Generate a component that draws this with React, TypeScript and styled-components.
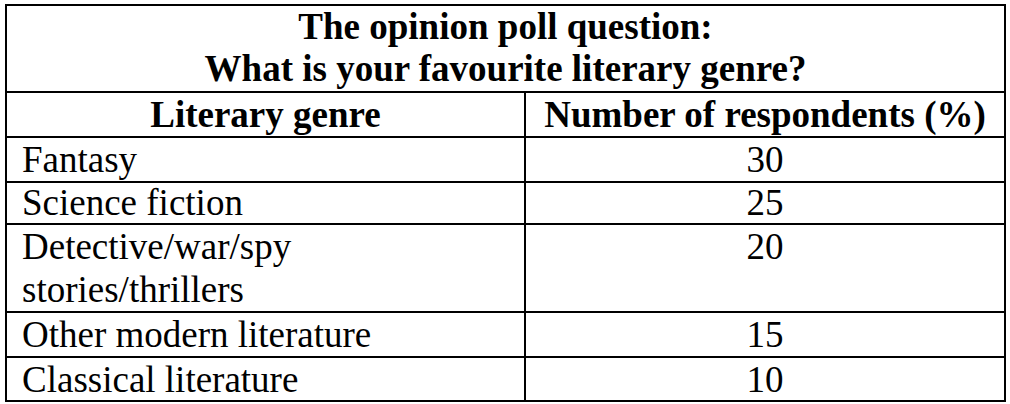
import React from "react";
import styled, { createGlobalStyle } from "styled-components";

const GlobalStyle = createGlobalStyle`
  html, body {
    margin: 0;
    padding: 0;
    background: #ffffff;
  }
`;

const Page = styled.div`
  padding: 4px 0 0 5px;
  font-family: "Liberation Serif", "Times New Roman", serif;
  color: #000;
`;

const Table = styled.div`
  display: grid;
  width: 1001px;
  box-sizing: border-box;
  grid-template-columns: 517px 478px;
  grid-template-rows: 85px 43px 43px 40px 86px 43px 42px;
  gap: 2px;
  padding: 2px;
  background: #000;
`;

const Cell = styled.div<{ $center?: boolean; $bold?: boolean; $span?: boolean; $tight?: boolean }>`
  background: #fff;
  font-size: 37px;
  line-height: ${(p) => (p.$tight ? "40px" : "43px")};
  font-weight: ${(p) => (p.$bold ? 700 : 400)};
  text-align: ${(p) => (p.$center ? "center" : "left")};
  padding: ${(p) => (p.$center ? "0" : "0 0 0 15px")};
  grid-column: ${(p) => (p.$span ? "1 / -1" : "auto")};
  white-space: nowrap;
`;

const TitleCell = styled(Cell)`
  line-height: 42px;
`;

const rows: { genre: React.ReactNode; value: string; tight?: boolean }[] = [
  { genre: "Fantasy", value: "30" },
  { genre: "Science fiction", value: "25", tight: true },
  {
    genre: (
      <>
        Detective/war/spy
        <br />
        stories/thrillers
      </>
    ),
    value: "20",
  },
  { genre: "Other modern literature", value: "15" },
  { genre: "Classical literature", value: "10" },
];

export default function App() {
  return (
    <>
      <GlobalStyle />
      <Page>
        <Table>
          <TitleCell $span $center $bold>
            The opinion poll question:
            <br />
            What is your favourite literary genre?
          </TitleCell>
          <Cell $center $bold>
            Literary genre
          </Cell>
          <Cell $center $bold>
            Number of respondents (%)
          </Cell>
          {rows.map((r, i) => (
            <React.Fragment key={i}>
              <Cell $tight={r.tight}>{r.genre}</Cell>
              <Cell $center $tight={r.tight}>
                {r.value}
              </Cell>
            </React.Fragment>
          ))}
        </Table>
      </Page>
    </>
  );
}
